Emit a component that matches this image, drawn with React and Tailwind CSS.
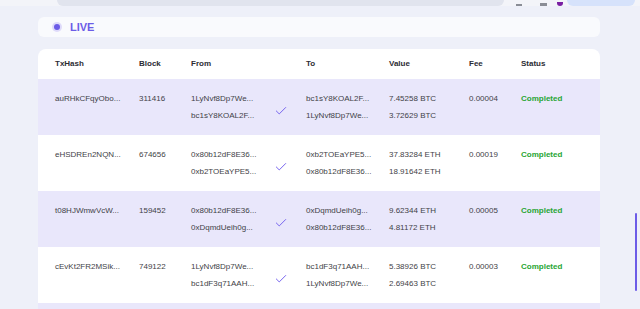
import { Check } from "lucide-react";

const rows = [
  {
    hash: "auRHkCFqyObo...",
    block: "311416",
    from: ["1LyNvf8Dp7We...", "bc1sY8KOAL2F..."],
    to: ["bc1sY8KOAL2F...", "1LyNvf8Dp7We..."],
    value: ["7.45258 BTC", "3.72629 BTC"],
    fee: "0.00004",
  },
  {
    hash: "eHSDREn2NQN...",
    block: "674656",
    from: ["0x80b12dF8E36...", "0xb2TOEaYPE5..."],
    to: ["0xb2TOEaYPE5...", "0x80b12dF8E36..."],
    value: ["37.83284 ETH", "18.91642 ETH"],
    fee: "0.00019",
  },
  {
    hash: "t08HJWmwVcW...",
    block: "159452",
    from: ["0x80b12dF8E36...", "0xDqmdUeih0g..."],
    to: ["0xDqmdUeih0g...", "0x80b12dF8E36..."],
    value: ["9.62344 ETH", "4.81172 ETH"],
    fee: "0.00005",
  },
  {
    hash: "cEvKt2FR2MSik...",
    block: "749122",
    from: ["1LyNvf8Dp7We...", "bc1dF3q71AAH..."],
    to: ["bc1dF3q71AAH...", "1LyNvf8Dp7We..."],
    value: ["5.38926 BTC", "2.69463 BTC"],
    fee: "0.00003",
  },
];

const cols = "grid grid-cols-[84px_52px_80px_35px_83px_80px_52px_1fr] pl-[17px]";

const Pair = ({ items }) => (
  <div className="flex flex-col gap-[7px]">
    {items.map((t, i) => (
      <span key={i} className="h-[10px] leading-[10px]">
        {t}
      </span>
    ))}
  </div>
);

const App = () => {
  return (
    <div
      className="relative h-[309px] w-[640px] overflow-hidden bg-[#eef0f9]"
      style={{ fontFamily: '"Liberation Sans", Arial, sans-serif' }}
    >
      {/* browser chrome sliver */}
      <div className="flex h-[6px] items-end bg-[#f3f4f9]">
        <div className="ml-[57px] h-[6px] w-[447px] rounded-b-[6px] bg-[#e1e4ee]" />
        <div className="ml-[12px] h-[2px] w-[6px] bg-[#8a8d96]" />
        <div className="ml-[18px] h-[3px] w-[7px] bg-[#8a8d96]" />
        <div className="ml-[10px] h-[4px] w-[6px] rounded-b-full bg-[#7a1fa2]" />
        <div className="ml-[4px] h-[6px] w-[68px] rounded-b-[6px] bg-[#d6e2fb]" />
      </div>

      <div className="ml-[38px] mt-[11px] w-[562px]">
        {/* live banner */}
        <div className="flex h-[20px] items-center gap-[8px] rounded-[6px] bg-[#f9fafd] pl-[14px]">
          <span className="flex h-[10px] w-[10px] items-center justify-center rounded-full bg-[#dedafa]">
            <span className="h-[6px] w-[6px] rounded-full bg-[#6c5ce7]" />
          </span>
          <span className="text-[11px] font-bold leading-none text-[#6c5ce7]">LIVE</span>
        </div>

        {/* table */}
        <div className="mt-[12px] rounded-t-[8px] bg-white">
          <div className={`${cols} h-[30px] items-center text-[8px] font-semibold text-[#2c2c33]`}>
            <span>TxHash</span>
            <span>Block</span>
            <span>From</span>
            <span />
            <span>To</span>
            <span>Value</span>
            <span>Fee</span>
            <span>Status</span>
          </div>
          {rows.map((r, i) => (
            <div
              key={r.hash}
              className={`${cols} h-[56px] items-start pt-[15px] pb-[13px] text-[8px] text-[#3f3f47] ${
                i % 2 === 0 ? "bg-[#e9e7fb]" : "bg-white"
              }`}
            >
              <span className="leading-[10px]">{r.hash}</span>
              <span className="leading-[10px]">{r.block}</span>
              <Pair items={r.from} />
              <div className="flex self-center pl-[3px] pt-[6px]">
                <Check size={14} strokeWidth={1.7} className="text-[#7563ee]" />
              </div>
              <Pair items={r.to} />
              <Pair items={r.value} />
              <span className="leading-[10px]">{r.fee}</span>
              <span className="font-bold leading-[10px] text-[#27a532]">Completed</span>
            </div>
          ))}
          <div className="h-[8px] bg-[#e9e7fb]" />
        </div>
      </div>

      {/* scrollbar thumb */}
      <div className="absolute right-[3px] top-[213px] h-[78px] w-[2px] rounded-full bg-[#6c5ce7]" />
    </div>
  );
};

export default App;
